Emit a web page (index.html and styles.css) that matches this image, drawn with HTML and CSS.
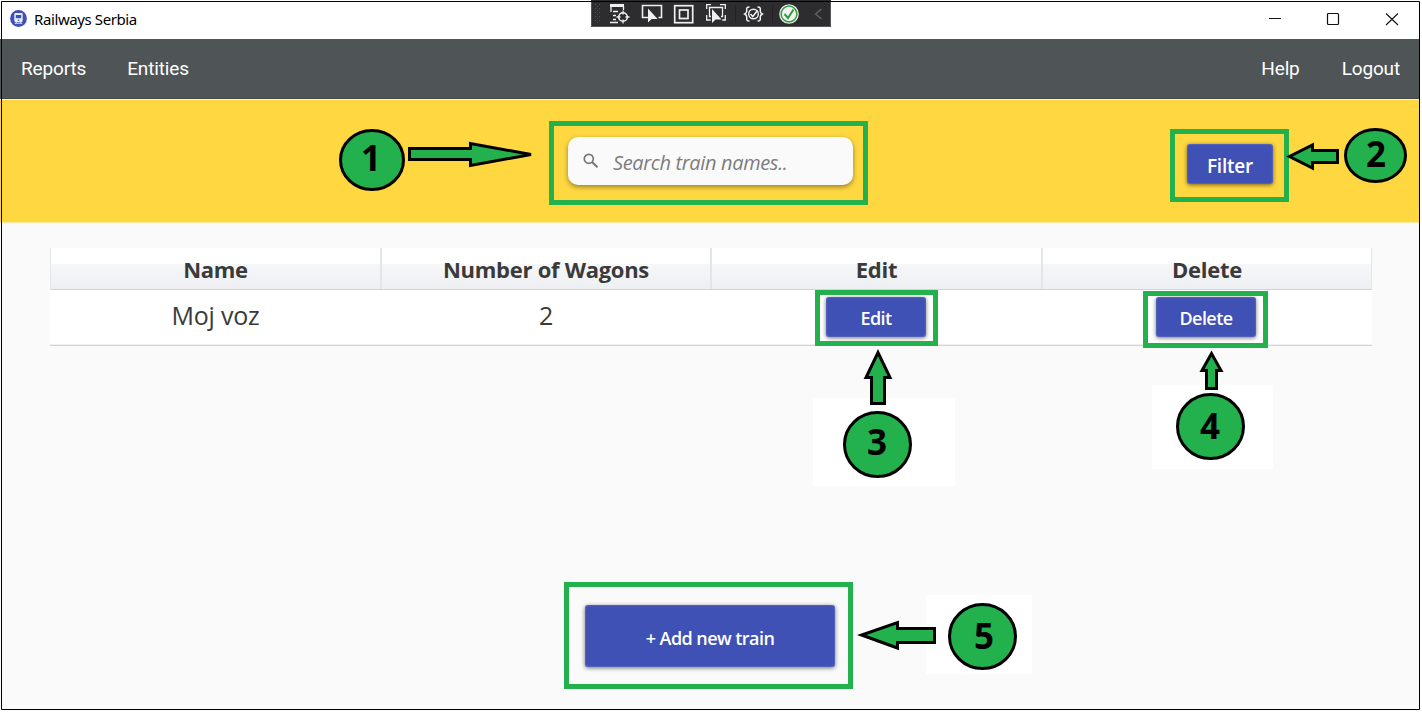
FILE: index.html
```html
<!DOCTYPE html>
<html lang="en">
<head>
<meta charset="utf-8">
<title>Railways Serbia</title>
<link rel="stylesheet" href="styles.css">
</head>
<body>
<div class="window">
  <header class="titlebar">
    <svg class="app-icon" width="17" height="17" viewBox="0 0 17 17"><circle cx="8.5" cy="8.5" r="8.4" fill="#3f51b5"/><path d="M5.500 3h6q1.200 0 1.200 1.200v6.300q0 1.500-1.500 1.500H5.800q-1.500 0-1.500-1.500V4.200q0-1.200 1.200-1.200z" fill="#e8eaf6"/><path d="M5.800 5h5.400v3.200H5.800z" fill="#3f51b5"/><path d="M6.500 12l-1.500 2M10.500 12l1.500 2M6 13.200h5" stroke="#e8eaf6" fill="none"/><circle cx="8.500" cy="10.200" r=".8" fill="#3f51b5"/></svg>
    <span class="app-title">Railways Serbia</span>
    <div class="controls">
      <svg width="130" height="14" viewBox="0 0 130 14" fill="none" stroke="#111"><path d="M0 6.500h12"/><rect x="58.500" y="1.500" width="11" height="11" rx="1" stroke-width="1.200"/><path d="M117 1.500l12 11.500M129 1.500L117 13" stroke-width="1.100"/></svg>
    </div>
  </header>
  <nav class="menu">
    <a class="reports">Reports</a><a class="entities">Entities</a>
    <span class="grow"></span>
    <a class="help">Help</a><a class="logout">Logout</a>
  </nav>
  <section class="toolbar">
    <div></div>
    <label class="search">
      <svg width="16" height="16" viewBox="0 0 16 16" fill="none" stroke="#777" stroke-width="1.700"><circle cx="5.800" cy="5.800" r="4.500"/><path d="M9 9l5.500 5.300" stroke-width="2"/></svg>
      <span>Search train names..</span>
    </label>
    <div class="filter-cell"><button class="btn filter">Filter</button></div>
  </section>
  <main class="content">
    <div class="table">
      <div class="row head"><div>Name</div><div>Number of Wagons</div><div>Edit</div><div>Delete</div></div>
      <div class="row data"><div>Moj voz</div><div>2</div><div><button class="btn small">Edit</button></div><div><button class="btn small">Delete</button></div></div>
    </div>
    <button class="btn add">+ Add new train</button>
  </main>
</div>

<svg class="debugbar" width="240" height="27" viewBox="591 0 240 27" fill="none" stroke="#f0f0f0">
  <rect x="591" y="0" width="240" height="27" fill="#2d2d30" stroke="none"/>
  <path d="M591.500 2v24.500h239V2" stroke="#555"/>
  <path d="M595.500 4v20M599.500 4v20" stroke="#555" stroke-dasharray="1 3"/><path d="M597.500 6v18" stroke="#555" stroke-dasharray="1 3"/>
  <path d="M610 5.500h14" stroke-width="3"/><path d="M611 5v7M613 11.500h5M613 15.500h3M613 19.500h3M610 22.500h8M623.500 6v4" stroke-width="1.300"/>
  <circle cx="623" cy="17" r="4.300" stroke-width="1.600"/><path d="M623 10.500v4M623 19.500v4M616.500 17h4M625.500 17h4" stroke-width="1.300"/>
  <path d="M649 17.500h-6.500V5.500h19v12h-3" stroke-width="1.600"/><path d="M648 8.500v14l3.600-3.600h6z" fill="#f0f0f0" stroke="none"/>
  <rect x="674.700" y="5.700" width="18" height="17" stroke-width="1.700"/><rect x="679.500" y="10" width="8.500" height="8.500" stroke-width="1.700"/>
  <path d="M711 4.700h-4.300V9M720 4.700h5.300V9M706.700 15v5h4M725.300 15v5h-3M711 16.500h-1.500v-9h13v9H721" stroke-width="1.300"/><path d="M712 9v14l3.500-3.500h6z" fill="#f0f0f0" stroke="none"/>
  <path d="M735.500 5v18M772.500 5v18" stroke="#222"/>
  <path d="M749.500 7c-4 0-2.500 2.500-2.800 4.500-.2 1.500-2 2.500-2 2.500s1.800 1 2 2.500c.3 2-1.200 4.500 2.800 4.500M757.500 7c4 0 2.500 2.500 2.800 4.500.2 1.500 2 2.500 2 2.500s-1.800 1-2 2.500c-.3 2 1.200 4.500-2.800 4.500" stroke-width="1.500"/><circle cx="753.500" cy="14" r="4.800" stroke-width="1.400"/><path d="M750.500 14l2.300 2.500 4.200-5.500" stroke-width="1.500"/>
  <circle cx="789" cy="14" r="9.800" fill="#f2f2f2" stroke="none"/><circle cx="789" cy="14" r="7.900" stroke="#359b3d" stroke-width="1.500"/><path d="M784.500 14l3.500 4 5.500-8.500" stroke="#359b3d" stroke-width="2"/>
  <path d="M821.500 9l-6 5 6 5" stroke="#666" stroke-width="1.300"/>
</svg>

<svg class="annotations" width="1422" height="714" viewBox="0 0 1422 714">
  <g class="patch"><path d="M813 398h142v88H813zM1152 385h121v84h-121zM926 595h106v79H926z"/></g>
  <g class="outline">
    <rect x="551.500" y="123.500" width="314" height="79"/>
    <rect x="1172.500" y="131.500" width="114" height="68"/>
    <rect x="817.500" y="292.500" width="118" height="51"/>
    <rect x="1145.500" y="293.500" width="120" height="52"/>
    <rect x="566.500" y="584.500" width="284" height="102"/>
  </g>
  <g class="arrow">
    <path d="M409.500 148.500H470.500V143.500L531 154.500L470.500 165.500V159.500H409.500Z"/>
    <path d="M1337.500 150.500H1312.500V145L1289.500 156.500L1312.500 168V162.500H1337.500Z"/>
    <path d="M871.500 403.500V377.500H866L878 352.500L890 377.500H884.500V403.500Z"/>
    <path d="M1206.500 388.500V370.500H1202L1211.500 353.500L1221 370.500H1216.500V388.500Z"/>
    <path d="M934.500 628.500H897.500V622.500L861.500 635L897.500 648V642.500H934.500Z"/>
    <ellipse cx="372" cy="160" rx="31.500" ry="29.500"/>
    <ellipse cx="1375.500" cy="155.500" rx="30" ry="26"/>
    <ellipse cx="877.500" cy="444.500" rx="33" ry="32"/>
    <ellipse cx="1210.500" cy="426.500" rx="33" ry="32"/>
    <ellipse cx="982.500" cy="636.500" rx="33" ry="32"/>
  </g>
  <g class="digit">
    <text x="371" y="171">1</text><text x="1376" y="167">2</text><text x="877" y="455">3</text><text x="1210" y="439">4</text><text x="984" y="649">5</text>
  </g>
  <path class="frame" d="M1.500 1.500H1419.500V709.500H1.500Z"/>
</svg>
</body>
</html>
```
FILE: styles.css
```css
* { box-sizing: border-box; }
body { margin: 0; width: 1422px; height: 714px; overflow: hidden; background: #fff; font-family: "Open Sans", "Noto Sans", sans-serif; color: #3a3a3a; }
.window { width: 1420px; height: 711px; display: flex; flex-direction: column; background: #fafafa; }
.titlebar { height: 39px; background: #fff; display: flex; align-items: center; padding: 0 21px 2px 10px; }
.app-title { margin-left: 7px; font: 15px "Noto Sans", sans-serif; letter-spacing: -.4px; color: #000; }
.controls { margin-left: auto; height: 14px; line-height: 0; }
.menu { height: 60px; background: #4f5457; border-bottom: 1px solid #45494c; display: flex; align-items: center; padding: 0 20px 0 21px; color: #fff; font: 19px Roboto, sans-serif; letter-spacing: -.15px; }
.entities { margin-left: 41px; }
.grow { flex: 1; }
.logout { margin-left: 42px; }
.toolbar { height: 124px; background: #ffd740; border-top: 1px solid #fff4c8; border-bottom: 1px solid #ffe99a; display: grid; grid-template-columns: 568px 285px 1fr; align-items: start; }
.search { height: 48px; margin-top: 37px; border-radius: 10px; background: #fafafa; box-shadow: 0 2px 5px rgba(0,0,0,.4); display: flex; align-items: center; padding-left: 15px; color: #7d7d7d; font-size: 20px; letter-spacing: -.35px; font-style: italic; }
.search svg { margin-top: -1px; }
.search span { margin-left: 14px; margin-top: 3px; white-space: nowrap; }
.filter-cell { padding: 44px 0 0 334px; }
.btn { display: block; border: 0; margin: 0; padding: 0; border-radius: 3px; background: #3f51b5; box-shadow: inset 0 0 2px #8790c8, 0 1px 4px rgba(0,0,0,.55); color: #fff; font: 600 18px "Open Sans", sans-serif; letter-spacing: -.55px; }
.filter { width: 86px; height: 40px; padding-top: 4px; font-size: 19px; letter-spacing: -.2px; }
.content { flex: 1; padding: 25px 48px 0 50px; }
.table { width: 1322px; }
.row { display: grid; grid-template-columns: 331px 330px 331px 330px; text-align: center; }
.head { height: 42px; background: linear-gradient(#fff 0 38%, #f6f7f9 39%, #eeeff2); border-bottom: 1px solid #d3d3d5; border-left: 1px solid #e6e6e8; font-weight: 700; font-size: 22px; letter-spacing: -.28px; line-height: 43px; }
.head > div { height: 41px; border-right: 2px solid #e4e5e7; }
.head > div:last-child { width: 329px; border-right: 1px solid #e4e5e7; }
.data { height: 56px; background: #fff; border-bottom: 1px solid #d4d4d4; box-shadow: inset 0 -1px #f0f0f0; font-size: 25px; letter-spacing: -.25px; line-height: 50px; }
.small { width: 100px; height: 40px; margin: 7px 0 0 115px; padding-top: 2px; }
.data > :last-child .small { margin-left: 114px; }
.add { width: 250px; height: 62px; margin: 259px 0 0 535px; padding-top: 3px; }
.debugbar { position: absolute; left: 591px; top: 0; }
.annotations { position: absolute; left: 0; top: 0; pointer-events: none; }
.patch { fill: #fff; }
.outline { fill: none; stroke: #22b14c; stroke-width: 5; }
.arrow { fill: #22b14c; stroke: #000; stroke-width: 3; }
.digit { font: 700 35px "Open Sans", sans-serif; fill: #000; text-anchor: middle; }
.frame { fill: none; stroke: #000; }
```
